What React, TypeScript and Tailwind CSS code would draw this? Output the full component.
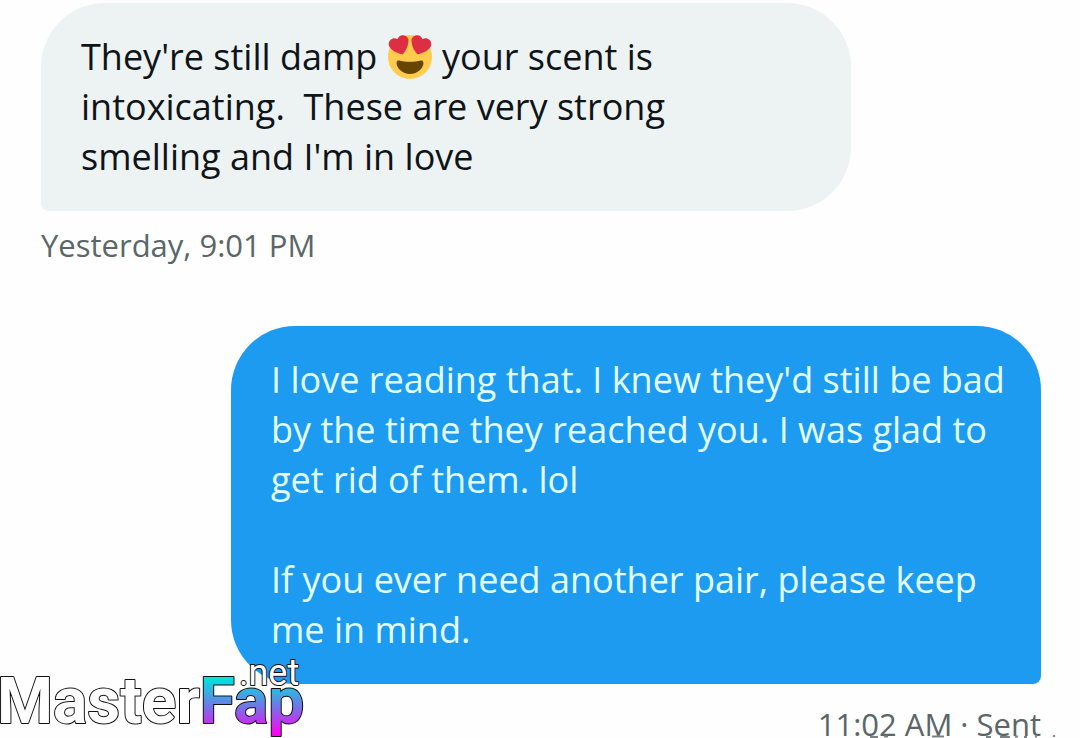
import type { ReactNode } from 'react';

type MessageProps = {
  sent?: boolean;
  meta: string;
  children: ReactNode;
};

function HeartEyes() {
  return (
    <svg viewBox="0 0 36 36" role="img" aria-label="heart eyes" className="mx-px inline-block size-11 align-[-9px]">
      <circle cx="18" cy="18" r="18" fill="#FFCC4D" />
      <path
        fill="#DD2E44"
        d="M16.65 3.28C15.79.88 13.14-.37 10.74.48c-1.46.52-2.48 1.7-2.91 3.08-1.2-.8-2.74-1.05-4.2-.53C1.23 3.89-.02 6.54.84 8.95c.12.34.28.66.47.95 1.83 3.16 7.35 5.69 10.71 5.91 2.43-2.33 4.96-7.87 4.74-11.5-.01-.35-.06-.69-.11-1.03zM19.35 3.28c.86-2.4 3.51-3.65 5.91-2.8 1.46.52 2.48 1.7 2.91 3.08 1.2-.8 2.74-1.05 4.2-.53 2.4.86 3.65 3.51 2.79 5.92-.12.34-.28.66-.47.95-1.83 3.16-7.35 5.69-10.71 5.91-2.43-2.33-4.96-7.87-4.74-11.5.01-.35.06-.69.11-1.03z"
      />
      <path
        fill="#664500"
        d="M18 21.85c-3.62 0-6.03-.42-9-1-.68-.13-2 0-2 2 0 4 4.6 9 11 9s11-5 11-9c0-2-1.32-2.13-2-2-2.97.58-5.38 1-9 1z"
      />
    </svg>
  );
}

function Message({ sent = false, meta, children }: MessageProps) {
  return (
    <article className={sent ? 'flex flex-col items-end gap-[18px]' : 'flex flex-col items-start gap-3'}>
      <div
        className={
          sent
            ? 'w-[81%] rounded-[64px] rounded-br-lg bg-[#1d9bf0] px-10 py-[29px] text-[#e2ffff]'
            : 'w-[81%] rounded-[64px] rounded-bl-lg bg-[#edf2f2] px-10 py-[29px] text-[#0f1419]'
        }
      >
        <p className="text-[36px] leading-[50px] whitespace-pre">{children}</p>
      </div>
      <p className="text-[31px] leading-[44px] text-[#5b6668]">{meta}</p>
    </article>
  );
}

function Watermark() {
  return (
    <svg
      viewBox="0 0 310 84"
      role="img"
      aria-label="MasterFap.net"
      className="absolute bottom-0 left-0 w-[310px]"
    >
      <defs>
        <linearGradient id="fap" gradientUnits="userSpaceOnUse" x1="0" y1="24" x2="0" y2="80">
          <stop offset="0" stopColor="#00e5dc" />
          <stop offset="0.5" stopColor="#6f78e8" />
          <stop offset="1" stopColor="#ff00f5" />
        </linearGradient>
      </defs>
      <g fontFamily="Roboto, sans-serif" stroke="#111" strokeWidth="2" paintOrder="stroke" strokeLinejoin="round">
        <text x="-3" y="69" fontSize="64" fontWeight="700" fill="#fff">
          Master<tspan fill="url(#fap)">Fap</tspan>
        </text>
        <text x="239" y="31" fontSize="36" fill="#fff">
          .net
        </text>
      </g>
    </svg>
  );
}

// tops of the next line, cut off by the bottom edge
function CutOffLine() {
  return (
    <svg viewBox="0 0 200 3" aria-hidden="true" className="absolute right-[10px] bottom-0 w-[200px]">
      <path
        d="M0 2h8M14 1.5h4M62 1.5h12M116 2h5M130 2h10M145 1.5h3M154 2h3M165 1.5h2M183 1h2"
        fill="none"
        stroke="#7b8283"
        strokeWidth="2"
      />
    </svg>
  );
}

export default function App() {
  return (
    <main className="relative h-screen overflow-hidden bg-[#fefefe] pt-[3px] font-['Open_Sans',sans-serif]">
      <div className="flex flex-col gap-[59px] pr-[39px] pl-[41px]">
        <Message meta="Yesterday, 9:01 PM">
          They're still damp <HeartEyes /> your scent is{'\n'}
          intoxicating.  These are very strong{'\n'}
          smelling and I'm in love
        </Message>
        <Message sent meta="11:02 AM · Sent">
          I love reading that. I knew they'd still be bad{'\n'}
          by the time they reached you. I was glad to{'\n'}
          get rid of them. lol{'\n\n'}
          If you ever need another pair, please keep{'\n'}
          me in mind.
        </Message>
      </div>
      <CutOffLine />
      <Watermark />
    </main>
  );
}
